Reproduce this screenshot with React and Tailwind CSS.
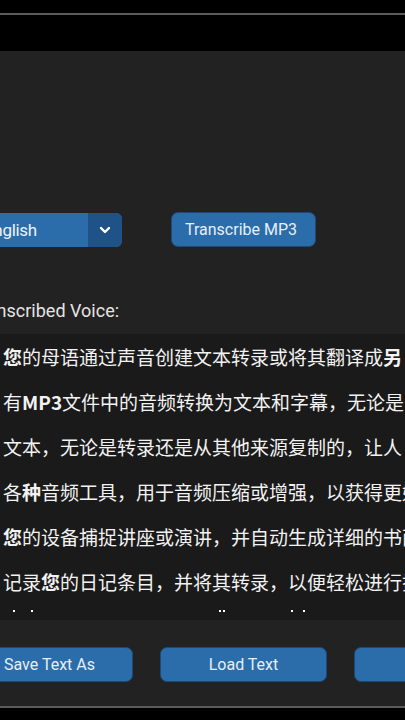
import React from 'react';

const lines = [
  [<b key="a" className="font-bold">您</b>, '的母语通过声音创建文本转录或将其翻译成', <b key="b" className="font-bold">另</b>],
  ['有', <b key="a" className="font-bold">MP3</b>, '文件中的音频转换为文本和字幕，无论是'],
  ['文本，无论是转录还是从其他来源复制的，让人'],
  ['各', <b key="a" className="font-bold">种</b>, '音频工具，用于音频压缩或增强，以获得更好'],
  [<b key="a" className="font-bold">您</b>, '的设备捕捉讲座或演讲，并自动生成详细的书面'],
  ['记录', <b key="a" className="font-bold">您</b>, '的日记条目，并将其转录，以便轻松进行搜'],
];

const Btn = ({ children, className = '' }) => (
  <button
    className={`h-[35px] shrink-0 rounded-[7px] bg-[#2a6daa] border border-[#1d4a75] text-[16px] text-[#e6eef6] ${className}`}
  >
    {children}
  </button>
);

export default function App() {
  return (
    <div
      className="w-[405px] h-[720px] bg-black overflow-hidden flex flex-col"
      style={{ fontFamily: 'Roboto, "Noto Sans CJK SC", sans-serif' }}
    >
      {/* top bar */}
      <div className="h-[13px] shrink-0" />
      <div className="h-[2px] bg-[#5c5c5c] shrink-0" />
      <div className="h-[36px] shrink-0" />

      <main className="flex-1 bg-[#222222] flex flex-col overflow-hidden">
        {/* language + transcribe */}
        <div className="flex items-center mt-[161px]">
          <div className="ml-[-24px] w-[146px] h-[34px] rounded-[6px] bg-[#2a6daa] flex overflow-hidden shrink-0">
            <span className="flex-1 pl-[8px] text-[17px] leading-[34px] tracking-[-0.3px] text-[#eef3f8]">English</span>
            <span className="w-[34px] bg-[#1f5287] flex items-center justify-center">
              <svg width="12" height="8" viewBox="0 0 12 8">
                <polyline points="2,2 6,6 10,2" fill="none" stroke="#ffffff" strokeWidth="2.4" strokeLinecap="round" strokeLinejoin="round" />
              </svg>
            </span>
          </div>
          <Btn className="ml-[49px] w-[145px] h-[34px] text-left pl-[13px] text-[15px]">Transcribe MP3</Btn>
        </div>

        <div className="mt-[53px] ml-[-29px] text-[18px] leading-[21px] text-[#e4e4e4] whitespace-nowrap">
          Transcribed Voice:
        </div>

        {/* transcript box */}
        <div
          className="mt-[13px] h-[286px] bg-[#1a1a1a] overflow-hidden shrink-0"
          style={{ fontFamily: '"Noto Sans CJK SC", sans-serif' }}
        >
          {lines.map((l, i) => (
            <div key={i} className="pl-[3px] text-[19px] leading-[45px] text-[#f2f2f2] whitespace-nowrap">
              {l}
            </div>
          ))}
          <div className="flex items-center mt-[6px] h-[2px]">
            <span className="ml-[13px] w-[2px] h-[2px] bg-white" />
            <span className="ml-[16px] w-[2px] h-[2px] bg-white" />
            <span className="ml-[186px] w-[2px] h-[2px] bg-white" />
            <span className="ml-[2px] w-[2px] h-[2px] bg-white" />
            <span className="ml-[66px] w-[2px] h-[2px] bg-white" />
            <span className="ml-[10px] w-[2px] h-[2px] bg-white" />
          </div>
        </div>

        {/* bottom buttons */}
        <div className="flex mt-[27px] gap-[27px] ml-[-34px]">
          <Btn className="w-[167px]">Save Text As</Btn>
          <Btn className="w-[167px]">Load Text</Btn>
          <Btn className="w-[167px]">Copy</Btn>
        </div>
      </main>

      <div className="h-[2px] bg-[#5c5c5c] shrink-0" />
      <div className="h-[12px] shrink-0" />
    </div>
  );
}
